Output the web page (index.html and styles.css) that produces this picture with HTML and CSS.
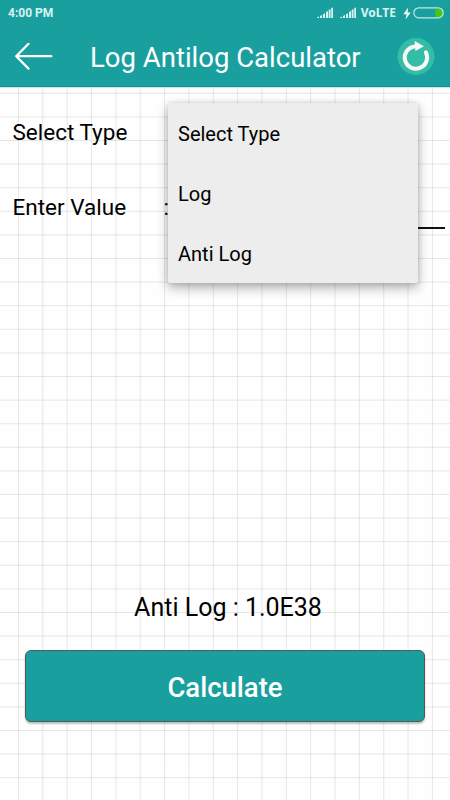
FILE: index.html
```html
<!DOCTYPE html>
<html lang="en">
<head>
    <meta charset="UTF-8">
    <meta name="viewport" content="width=device-width, initial-scale=1.0">
    <title>Log Antilog Calculator</title>
    <link rel="stylesheet" href="styles.css">
</head>
<body>
    <header class="header">
        <div class="status-bar">
            <span class="time">4:00 PM</span>
            <svg class="signal" width="16" height="12" viewBox="0 0 16 12">
                <path d="M0 11v-.5l2-1V11zM3 11V9l2-1v3zM6 11V7.3l2-1V11zM9 11V5l2-1v7zM11.7 11V3l1.8-1v9zM14.2 11V1.2l1.8-1V11z"/>
            </svg>
            <svg class="signal second" width="16" height="12" viewBox="0 0 16 12">
                <path d="M0 11v-.5l2-1V11zM3 11V9l2-1v3zM6 11V7.3l2-1V11zM9 11V5l2-1v7zM11.7 11V3l1.8-1v9zM14.2 11V1.2l1.8-1V11z"/>
            </svg>
            <span class="network">VoLTE</span>
            <svg class="bolt" width="8" height="13" viewBox="0 0 8 13">
                <path d="M5.2 0.5L0.3 7.2h3.1L2.6 12.5 7.7 5.6H4.6z"/>
            </svg>
            <svg class="battery" width="31" height="12" viewBox="0 0 31 12">
                <path class="level" d="M22.5 2h3.5a4 4 0 0 1 0 8h-3.5z"/>
                <rect x="0.8" y="0.8" width="29.4" height="10" rx="5"/>
            </svg>
        </div>
        <div class="title-bar">
            <svg class="back" width="38" height="28" viewBox="0 0 38 28">
                <path d="M13.5 0.8L1.2 13.2 13.5 25.6M1.2 13.2H36.3"/>
            </svg>
            <h1>Log Antilog Calculator</h1>
            <svg class="reset" width="38" height="38" viewBox="0 0 38 38">
                <circle cx="19" cy="18.5" r="18.5"/>
                <path class="ring" d="M17.5 8.4A11.2 11.2 0 1 0 28.9 14.4"/>
                <path class="tip" d="M17.6 3.1L27 8.2 18.4 13z"/>
            </svg>
        </div>
    </header>

    <main class="content">
        <div class="row">
            <label>Select Type</label>
            <div class="field">
                <ul class="dropdown">
                    <li>Select Type</li>
                    <li>Log</li>
                    <li>Anti Log</li>
                </ul>
            </div>
        </div>
        <div class="row">
            <label>Enter Value</label>
            <div class="field">:<div class="value"></div></div>
        </div>
        <p class="result">Anti Log : 1.0E38</p>
        <button class="calculate">Calculate</button>
    </main>
</body>
</html>
```

FILE: styles.css
```css
* { box-sizing: border-box; }

body {
    margin: 0;
    height: 800px;
    display: flex;
    flex-direction: column;
    overflow: hidden;
    font-family: Roboto, "Liberation Sans", sans-serif;
    color: #000;
}

.header {
    height: 88px;
    background: #1a9f9f;
    border-bottom: 1px solid #c8e6e6;
    box-shadow: inset 0 -1px #109292;
    color: #fff;
}

/* status bar */
.status-bar {
    height: 26px;
    display: flex;
    align-items: center;
    padding: 0 6px 0 8px;
    font-size: 12px;
    font-weight: 700;
    color: #d8f3f1;
}
.time { margin-right: auto; }
.signal { fill: #d8f3f1; }
.second { margin-left: 7px; }
.network { margin-left: 5px; font-family: "Noto Sans", sans-serif; line-height: 16px; padding-bottom: 1px; }
.bolt { margin-left: 7px; fill: #e8f8f7; }
.battery { margin-left: 2px; fill: none; stroke: #bfe9e6; stroke-width: 1.2; }
.level { fill: #4bc70a; stroke: none; }

/* title bar */
.title-bar {
    height: 61px;
    display: flex;
    align-items: center;
    padding: 0 15px;
}
.title-bar h1 {
    margin: 2px auto 0 37px;
    font-size: 27.5px;
    font-weight: 400;
    line-height: 32px;
    white-space: nowrap;
}
.back { fill: none; stroke: #fff; stroke-width: 2.3; stroke-linecap: round; stroke-linejoin: round; }
.reset circle { fill: #33bda5; }
.reset .ring { fill: none; stroke: #f7f8f7; stroke-width: 4; stroke-linecap: round; }
.reset .tip { fill: #f7f8f7; }

/* graph paper */
.content {
    flex: 1;
    display: flex;
    flex-direction: column;
    padding-top: 7px;
    background:
        repeating-linear-gradient(90deg, transparent 0, rgba(0, 0, 0, 0.09) 1px, transparent 2px 24.35px) -6.9px 0 / 480px 100%,
        repeating-linear-gradient(180deg, transparent 0, rgba(0, 0, 0, 0.09) 1px, transparent 2px 23.6px) 0 -19.3px / 100% 760px,
        #fefefe;
}

.row {
    height: 75px;
    display: flex;
    padding: 0 5px 0 12.5px;
    font-size: 22.5px;
    line-height: 74px;
}
.row label { width: 151px; }
.field { position: relative; flex: 1; height: 100%; }
.value { height: 2px; margin: -17px 0 0 6px; background: #111; }

.dropdown {
    position: absolute;
    top: 8px;
    left: 4.5px;
    z-index: 1;
    width: 250px;
    margin: 0;
    padding: 0;
    list-style: none;
    background: #ededed;
    border-radius: 2px;
    box-shadow: 0 5px 12px rgba(0, 0, 0, 0.3), 0 0 5px rgba(0, 0, 0, 0.15);
}
.dropdown li { height: 60px; padding-left: 10px; font-size: 20px; line-height: 62px; }

.result { margin: auto 0 26px 6px; text-align: center; font-size: 25px; line-height: 32px; }

.calculate {
    height: 72px;
    margin: 0 25px 78px;
    padding: 3px 0 0;
    background: #1a9f9f;
    border: 1px solid #575757;
    border-radius: 6px;
    box-shadow: 0 2px 2px rgba(0, 0, 0, 0.25);
    color: #fff;
    font-family: inherit;
    font-size: 27.5px;
    font-weight: 500;
}
```
